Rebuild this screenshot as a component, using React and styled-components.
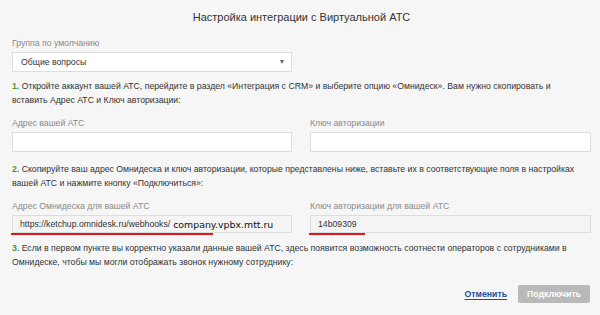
import styled, { createGlobalStyle } from 'styled-components';

const GlobalStyle = createGlobalStyle`
    * {
        box-sizing: border-box;
    }
    body {
        margin: 0;
        background: #f6f6f6;
        font-family: 'Liberation Sans', Arial, sans-serif;
    }
`;

function App() {
    return (
        <Page>
            <GlobalStyle />
            <Title>Настройка интеграции с Виртуальной АТС</Title>

            <Label>Группа по умолчанию</Label>
            <SelectBox>
                <span>Общие вопросы</span>
                <Arrow />
            </SelectBox>

            <Step>
                <b>1.</b> Откройте аккаунт вашей АТС, перейдите в раздел
                «Интеграция с CRM» и выберите опцию «Омнидеск». Вам нужно
                скопировать и вставить Адрес АТС и Ключ авторизации:
            </Step>

            <Columns>
                <Field>
                    <Label>Адрес вашей АТС</Label>
                    <Input />
                </Field>
                <Field>
                    <Label>Ключ авторизации</Label>
                    <Input />
                </Field>
            </Columns>

            <Step $top={11}>
                <b>2.</b> Скопируйте ваш адрес Омнидеска и ключ авторизации,
                которые представлены ниже, вставьте их в соответствующие поля в
                настройках вашей АТС и нажмите кнопку «Подключиться»:
            </Step>

            <Columns>
                <Field>
                    <Label>Адрес Омнидеска для вашей АТС</Label>
                    <Input $readonly $height={18}>
                        https://ketchup.omnidesk.ru/webhooks/
                        <Domain>company.vpbx.mtt.ru</Domain>
                        <Underline $width={202} />
                    </Input>
                </Field>
                <Field>
                    <Label>Ключ авторизации для вашей АТС</Label>
                    <Input $readonly $height={18}>
                        14b09309
                        <Underline $width={56} />
                    </Input>
                </Field>
            </Columns>

            <Step $top={9}>
                <b>3.</b> Если в первом пункте вы корректно указали данные
                вашей АТС, здесь появится возможность соотнести операторов с
                сотрудниками в Омнидеске, чтобы мы могли отображать звонок
                нужному сотруднику:
            </Step>

            <Footer>
                <CancelLink>Отменить</CancelLink>
                <ConnectButton>Подключить</ConnectButton>
            </Footer>
        </Page>
    );
}

const Page = styled.div`
    width: 600px;
    height: 315px;
    padding: 7px 9px 0 12px;
    color: #333333;
    font-size: 8.7px;
    overflow: hidden;
`;

const Title = styled.h1`
    margin: 0 0 9px;
    font-size: 11px;
    line-height: 20px;
    font-weight: 400;
    text-align: center;
    color: #333333;
`;

const Label = styled.div`
    font-size: 8.7px;
    line-height: 14px;
    color: #8a8a8a;
    margin-bottom: 2px;
`;

const SelectBox = styled.div`
    width: 280px;
    height: 20px;
    background: #ffffff;
    border: 1px solid #dddddd;
    display: flex;
    align-items: center;
    justify-content: space-between;
    padding: 0 7px 0 8px;
    font-size: 8.7px;
    color: #333333;
`;

const Arrow = styled.i`
    width: 0;
    height: 0;
    border-left: 2.5px solid transparent;
    border-right: 2.5px solid transparent;
    border-top: 4px solid #666666;
`;

const Step = styled.p`
    margin: ${(p) => (p.$top !== undefined ? p.$top : 8)}px 0 0;
    padding-right: 7px;
    font-size: 8.7px;
    line-height: 13.5px;
    color: #333333;

    b {
        color: #4b9a2c;
        font-weight: 700;
    }
`;

const Columns = styled.div`
    display: grid;
    grid-template-columns: 280px 281px;
    column-gap: 18px;
    margin-top: 9px;
`;

const Field = styled.div`
    display: flex;
    flex-direction: column;
`;

const Input = styled.div`
    position: relative;
    height: ${(p) => p.$height || 20}px;
    background: ${(p) => (p.$readonly ? '#f4f4f4' : '#ffffff')};
    border: 1px solid #dddddd;
    display: flex;
    align-items: center;
    padding: 0 7px;
    font-size: 8.7px;
    color: #333333;
    white-space: nowrap;
`;

const Domain = styled.span`
    font-family: 'DejaVu Sans', Verdana, sans-serif;
    font-size: 9.4px;
    color: #111111;
    margin-left: 3px;
`;

const Underline = styled.span`
    position: absolute;
    left: -2px;
    bottom: -3px;
    width: ${(p) => p.$width}px;
    height: 2px;
    background: #e4151b;
`;

const Footer = styled.div`
    display: flex;
    justify-content: flex-end;
    align-items: center;
    gap: 11px;
    margin-top: 16px;
    padding-right: 1px;
`;

const CancelLink = styled.a`
    font-size: 8.7px;
    font-weight: 700;
    color: #1d4f9c;
    text-decoration: underline;
    text-decoration-color: #1d4f9c;
    text-underline-offset: 2px;
    cursor: pointer;
`;

const ConnectButton = styled.button`
    width: 72px;
    height: 18px;
    border: none;
    border-radius: 2px;
    background: #b9b9b9;
    color: #ffffff;
    font-family: 'Liberation Sans', Arial, sans-serif;
    font-size: 8.7px;
    font-weight: 700;
    padding: 0;
`;

export default App;
